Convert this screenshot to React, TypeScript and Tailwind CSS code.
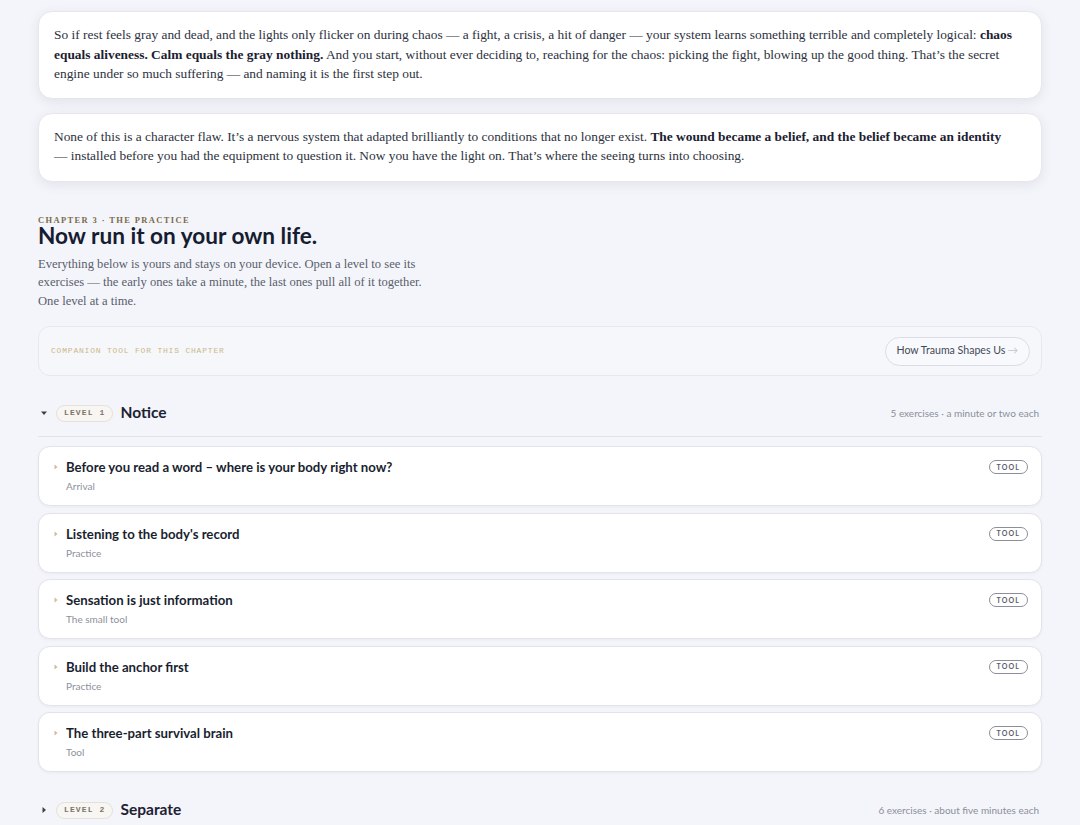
import React from 'react';

const serif = "font-['Liberation_Serif',Georgia,serif]";
const sans = "font-['Lato','Open_Sans',sans-serif]";

type Exercise = { title: string; kind: string };

const notice: Exercise[] = [
  { title: 'Before you read a word – where is your body right now?', kind: 'Arrival' },
  { title: "Listening to the body's record", kind: 'Practice' },
  { title: 'Sensation is just information', kind: 'The small tool' },
  { title: 'Build the anchor first', kind: 'Practice' },
  { title: 'The three-part survival brain', kind: 'Tool' },
];

const Caret = ({ open }: { open: boolean }) => (
  <svg width="8" height="8" viewBox="0 0 8 8" className="shrink-0">
    {open ? <path d="M1 2.5h6L4 6z" fill="#3b3f4c" /> : <path d="M2.5 1v6L6 4z" fill="#3b3f4c" />}
  </svg>
);

const LevelHeader = ({ n, name, meta, open }: { n: number; name: string; meta: string; open: boolean }) => (
  <div className="flex items-center h-[26px] pl-[2px] pr-[3px]">
    <Caret open={open} />
    <span className="ml-[8px] flex items-center h-[17px] px-[7px] rounded-full border border-[#e6e0d6] bg-[#f8f6f2] text-[8px] font-['Liberation_Mono',monospace] tracking-[0.14em] text-[#7d7466] font-bold">
      LEVEL {n}
    </span>
    <span className={`ml-[7px] ${sans} text-[15.5px] font-bold text-[#1d2233]`}>{name}</span>
    <span className={`ml-auto ${sans} text-[10px] text-[#8b8f9b]`}>{meta}</span>
  </div>
);

const ExerciseCard = ({ item }: { item: Exercise }) => (
  <div className="h-[60px] bg-white border border-[#e3e4ea] rounded-[12px] shadow-[0_1px_3px_rgba(30,40,80,0.05)] flex items-start pl-[14px] pr-[13px] pt-[11px]">
    <svg width="6" height="8" viewBox="0 0 6 8" className="mt-[5px] shrink-0">
      <path d="M1.5 1.5v5L4.5 4z" fill="#cdbd95" />
    </svg>
    <div className="ml-[7px] flex-1">
      <div className={`${sans} text-[13.2px] font-bold text-[#1a1f30] leading-[18px]`}>{item.title}</div>
      <div className={`${sans} text-[10px] text-[#8d919c] mt-[3px]`}>{item.kind}</div>
    </div>
    <span className={`${sans} mt-[2px] h-[14px] px-[7px] flex items-center rounded-full border border-[#8a8f99] text-[7px] font-bold tracking-[0.16em] text-[#5b606c]`}>
      TOOL
    </span>
  </div>
);

export default function App() {
  return (
    <div className="min-h-[825px] bg-[#f4f5fa]">
      <div className="w-[1004px] mx-auto pt-[11px] pb-[20px]">
        {/* closing passages of the previous chapter */}
        <div className={`bg-white border border-[#e6e6ec] rounded-[14px] shadow-[0_3px_12px_rgba(40,50,90,0.09)] px-[15px] pt-[13px] pb-[14px] ${serif} text-[13.4px] leading-[19.5px] text-[#2d3140]`}>
          So if rest feels gray and dead, and the lights only flicker on during chaos — a fight, a crisis, a hit of danger — your system learns something terrible and completely logical:{' '}
          <b className="text-[#1b2030]">chaos equals aliveness. Calm equals the gray nothing.</b> And you start, without ever deciding to, reaching for the chaos: picking the fight, blowing up the good thing. That’s the secret engine under so much suffering — and naming it is the first step out.
        </div>
        <div className={`mt-[14px] bg-white border border-[#e6e6ec] rounded-[14px] shadow-[0_3px_12px_rgba(40,50,90,0.09)] px-[15px] pt-[13px] pb-[15px] ${serif} text-[13.4px] leading-[19.5px] text-[#2d3140]`}>
          None of this is a character flaw. It’s a nervous system that adapted brilliantly to conditions that no longer exist.{' '}
          <b className="text-[#1b2030]">The wound became a belief, and the belief became an identity</b> —{'\u00a0'}installed before you had the equipment to question it. Now you have the light on. That’s where the seeing turns into choosing.
        </div>

        {/* chapter intro */}
        <div className={`mt-[33px] ${serif} text-[8.5px] font-bold tracking-[0.16em] text-[#7b6a4c] leading-[10px]`}>
          CHAPTER 3 · THE PRACTICE
        </div>
        <h2 className={`${sans} text-[22.6px] font-bold text-[#161c31] leading-[22px]`}>
          Now run it on your own life.
        </h2>
        <p className={`mt-[8px] w-[394px] ${serif} text-[12.6px] leading-[18.5px] text-[#595e6c]`}>
          Everything below is yours and stays on your device. Open a level to see its exercises — the early ones take a minute, the last ones pull all of it together. One level at a time.
        </p>

        <div className="mt-[16px] h-[50px] rounded-[12px] border border-[#e7e8ee] bg-[#f6f7fb] flex items-center pl-[12px] pr-[11px]">
          <span className="font-['Liberation_Mono',monospace] text-[8px] tracking-[0.8px] text-[#cbb888]">
            COMPANION TOOL FOR THIS CHAPTER
          </span>
          <span className={`ml-auto h-[29px] px-[11px] flex items-center rounded-full border border-[#dcdde4] bg-[#f8f9fc] ${sans} text-[10.6px] text-[#444958]`}>
            How Trauma Shapes Us <span className="ml-[2px] text-[#c5c6cc]">→</span>
          </span>
        </div>

        {/* level 1 */}
        <div className="mt-[24px]">
          <LevelHeader n={1} name="Notice" meta="5 exercises · a minute or two each" open />
        </div>
        <div className="mt-[10px] border-t border-[#e2e3e9]" />
        <div className="mt-[9px] flex flex-col gap-[6.5px]">
          {notice.map((e) => (
            <ExerciseCard key={e.title} item={e} />
          ))}
        </div>

        {/* level 2 */}
        <div className="mt-[25px]">
          <LevelHeader n={2} name="Separate" meta="6 exercises · about five minutes each" open={false} />
        </div>
      </div>
    </div>
  );
}
